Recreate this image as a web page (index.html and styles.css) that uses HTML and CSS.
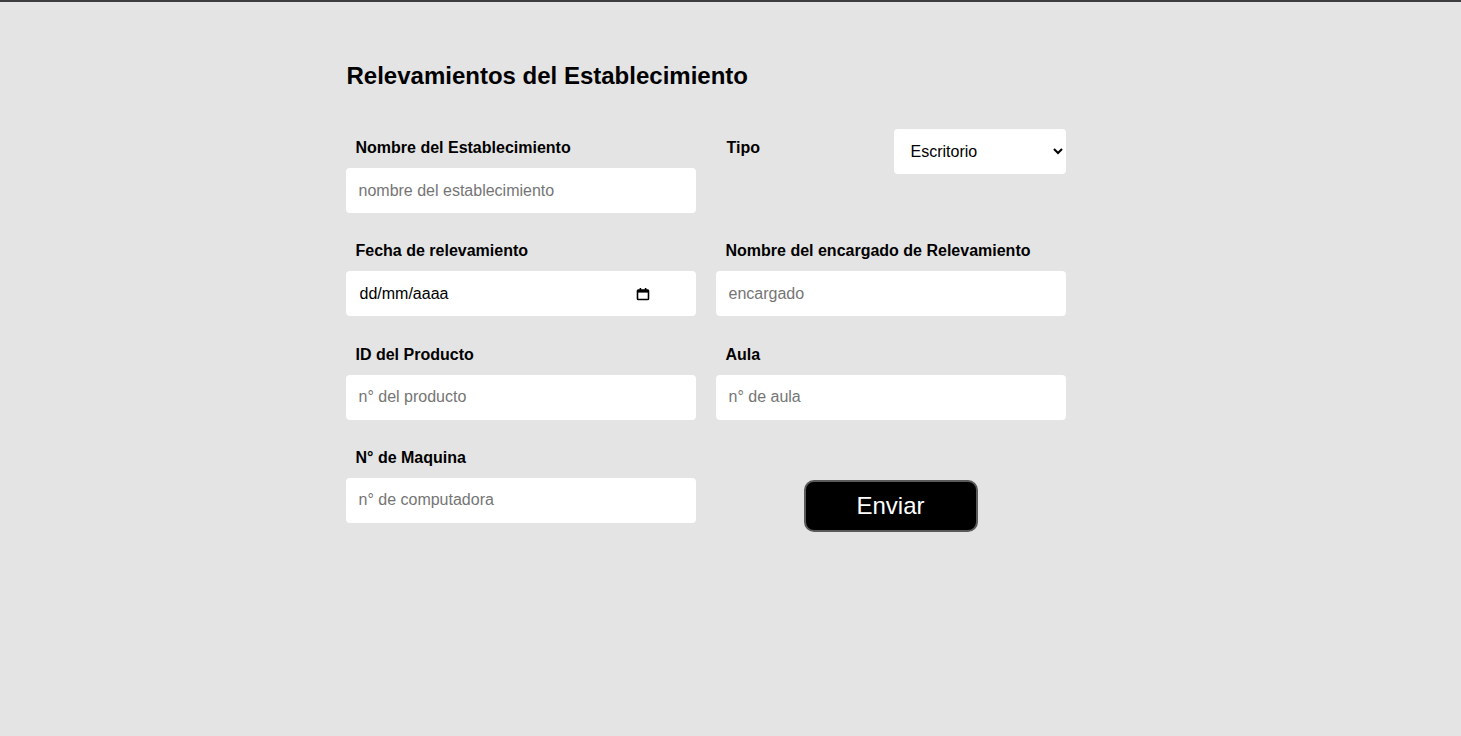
FILE: index.html
```html
<!DOCTYPE html>
<html lang="es">
<head>
<meta charset="utf-8">
<title>Relevamientos del Establecimiento</title>
<link rel="stylesheet" href="styles.css">
</head>
<body>
<main class="page">
  <h1 class="title">Relevamientos del Establecimiento</h1>
  <form class="form">
    <div class="field">
      <label class="label" for="nombre">Nombre del Establecimiento</label>
      <input class="input" id="nombre" type="text" placeholder="nombre del establecimiento">
    </div>
    <div class="field field-row">
      <label class="label" for="tipo">Tipo</label>
      <select class="select" id="tipo">
        <option>Escritorio</option>
        <option>Notebook</option>
      </select>
    </div>
    <div class="field">
      <label class="label" for="fecha">Fecha de relevamiento</label>
      <div class="input date">
        <span class="date-text">dd/mm/aaaa</span>
        <svg class="cal" width="14" height="14" viewBox="0 0 14 14" aria-hidden="true">
          <rect x="1.5" y="3" width="11" height="9.5" rx="0.8" fill="none" stroke="#000" stroke-width="1.6"/>
          <rect x="1.5" y="3" width="11" height="2.6" fill="#000"/>
          <rect x="3.6" y="1" width="1.6" height="2.5" fill="#000"/>
          <rect x="8.8" y="1" width="1.6" height="2.5" fill="#000"/>
        </svg>
      </div>
    </div>
    <div class="field">
      <label class="label" for="encargado">Nombre del encargado de Relevamiento</label>
      <input class="input" id="encargado" type="text" placeholder="encargado">
    </div>
    <div class="field">
      <label class="label" for="producto">ID del Producto</label>
      <input class="input" id="producto" type="text" placeholder="n° del producto">
    </div>
    <div class="field">
      <label class="label" for="aula">Aula</label>
      <input class="input" id="aula" type="text" placeholder="n° de aula">
    </div>
    <div class="field">
      <label class="label" for="maquina">N° de Maquina</label>
      <input class="input" id="maquina" type="text" placeholder="n° de computadora">
    </div>
    <div class="field field-submit">
      <button class="button" type="submit">Enviar</button>
    </div>
  </form>
</main>
</body>
</html>
```
FILE: styles.css
```css
html, body {
  margin: 0;
  padding: 0;
}
body {
  background: #e4e4e4;
  border-top: 2px solid #3d3d3f;
  font-family: "Liberation Sans", Arial, sans-serif;
  color: #000;
  min-height: 734px;
}
.page {
  width: 770px;
  margin: 0 auto;
  padding: 60px 50px 0 0;
  box-sizing: border-box;
}
.title {
  margin: 0 0 39px 1px;
  font-size: 24px;
  font-weight: bold;
  line-height: 28px;
}
.form {
  display: grid;
  grid-template-columns: 350px 350px;
  column-gap: 20px;
  row-gap: 19.3px;
  align-items: start;
}
.field {
  display: flex;
  flex-direction: column;
}
.label {
  display: block;
  padding: 10px 10px 0;
  margin-bottom: 11px;
  font-size: 16px;
  line-height: 18px;
  font-weight: bold;
}
.input {
  box-sizing: border-box;
  height: 45px;
  width: 350px;
  border: none;
  border-radius: 4px;
  background: #fff;
  padding: 0 13px;
  font-family: "Liberation Sans", Arial, sans-serif;
  font-size: 16px;
  color: #000;
  outline: none;
}
.input::placeholder {
  color: #757575;
}
.date {
  display: flex;
  align-items: center;
  justify-content: space-between;
  padding: 0 46px 0 14px;
}
.date-text {
  font-size: 16px;
}
.cal {
  display: block;
}
.field-row {
  flex-direction: row;
  justify-content: space-between;
  align-items: flex-start;
}
.field-row .label {
  padding-left: 11px;
}
.select {
  box-sizing: border-box;
  width: 172px;
  height: 45px;
  border: none;
  border-radius: 4px;
  background: #fff;
  padding: 0 11px 0 13px;
  font-family: "Liberation Sans", Arial, sans-serif;
  font-size: 16px;
  color: #000;
  outline: none;
}
.field-submit {
  align-items: center;
  padding-top: 41px;
}
.button {
  box-sizing: border-box;
  width: 174px;
  height: 52px;
  background: #000;
  color: #fff;
  border: 2px solid #5a5a5a;
  border-radius: 10px;
  font-family: "Liberation Sans", Arial, sans-serif;
  font-size: 24px;
  cursor: pointer;
}
```
